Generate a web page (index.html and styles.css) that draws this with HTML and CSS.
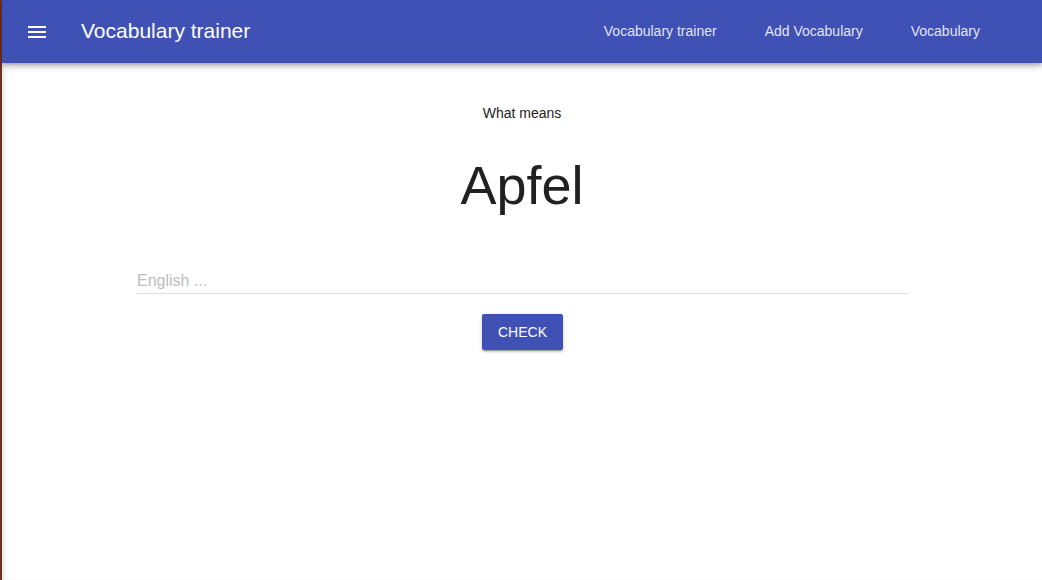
FILE: index.html
```html
<!DOCTYPE html>
<html lang="en">
<head>
<meta charset="utf-8">
<title>Vocabulary trainer</title>
<link rel="stylesheet" href="styles.css">
</head>
<body>
<div class="app">
  <header class="toolbar">
    <button class="menu-btn" aria-label="Menu">
      <svg width="24" height="24" viewBox="0 0 24 24"><path d="M3 6h18v2H3zM3 11h18v2H3zM3 16h18v2H3z" fill="#fff"/></svg>
    </button>
    <div class="title">Vocabulary trainer</div>
    <nav class="nav">
      <a class="nav-link">Vocabulary trainer</a>
      <a class="nav-link">Add Vocabulary</a>
      <a class="nav-link">Vocabulary</a>
    </nav>
  </header>
  <main class="content">
    <div class="question">What means</div>
    <div class="word">Apfel</div>
    <div class="field">
      <input class="input" type="text" placeholder="English ...">
    </div>
    <button class="check-btn">CHECK</button>
  </main>
</div>
</body>
</html>
```
FILE: styles.css
```css
html, body {
  margin: 0;
  padding: 0;
  height: 100%;
}
body {
  font-family: "Liberation Sans", Arial, sans-serif;
  background: #fff;
  color: #222;
}
.app {
  height: 100%;
  border-left: 2px solid #74301f;
  box-sizing: border-box;
  display: flex;
  flex-direction: column;
}
.toolbar {
  height: 63px;
  flex: none;
  background: #3f51b5;
  display: flex;
  align-items: center;
  box-shadow: 0 2px 4px -1px rgba(0,0,0,.2), 0 4px 5px 0 rgba(0,0,0,.14), 0 1px 10px 0 rgba(0,0,0,.12);
  position: relative;
  z-index: 1;
}
.menu-btn {
  margin-left: 23px;
  width: 24px;
  height: 24px;
  padding: 0;
  border: 0;
  background: none;
  display: flex;
}
.title {
  margin-left: 32px;
  font-size: 21px;
  color: #fff;
  margin-top: -1px;
}
.nav {
  margin-left: auto;
  margin-right: 38px;
  display: flex;
}
.nav-link {
  padding: 0 24px;
  font-size: 14px;
  color: rgba(255,255,255,.87);
  margin-top: -1px;
}
.content {
  flex: 1;
  display: flex;
  flex-direction: column;
  align-items: center;
  padding-top: 40px;
  box-shadow: inset 5px 0 5px -3px rgba(0,0,0,.12);
}
.question {
  font-size: 14px;
  line-height: 20px;
  color: #222;
}
.word {
  margin-top: 30px;
  font-size: 54px;
  line-height: 64px;
  color: #212121;
}
.field {
  margin-top: 48px;
  width: 771px;
  margin-left: 1px;
}
.input {
  width: 100%;
  box-sizing: border-box;
  border: 0;
  border-bottom: 1px solid #ddd;
  padding: 6px 0 2px;
  font-family: inherit;
  font-size: 16px;
  line-height: 20px;
  outline: none;
  color: #222;
  background: transparent;
}
.input::placeholder {
  color: #bdbdbd;
}
.check-btn {
  margin-top: 20px;
  width: 81px;
  height: 36px;
  border: 0;
  border-radius: 2px;
  background: #3f51b5;
  color: #fff;
  font-family: inherit;
  font-size: 14px;
  margin-left: 1px;
  box-shadow: 0 3px 1px -2px rgba(0,0,0,.2), 0 2px 2px 0 rgba(0,0,0,.14), 0 1px 5px 0 rgba(0,0,0,.12);
}
```
